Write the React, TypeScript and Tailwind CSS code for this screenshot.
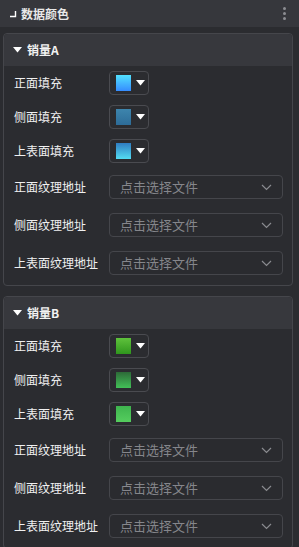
import React from 'react';

const font = { fontFamily: '"Noto Sans CJK SC", "Noto Sans", sans-serif' };

type ColorRow = { label: string; from: string; to: string };
type Group = { name: string; colors: ColorRow[] };

const groups: Group[] = [
  {
    name: '销量A',
    colors: [
      { label: '正面填充', from: '#52e2ff', to: '#358cff' },
      { label: '侧面填充', from: '#3d85ad', to: '#2d6c98' },
      { label: '上表面填充', from: '#2f7dc2', to: '#54dcf2' },
    ],
  },
  {
    name: '销量B',
    colors: [
      { label: '正面填充', from: '#5fc23c', to: '#2f961d' },
      { label: '侧面填充', from: '#2d6a38', to: '#42c057' },
      { label: '上表面填充', from: '#3eb44e', to: '#55cd5e' },
    ],
  },
];

const textures = ['正面纹理地址', '侧面纹理地址', '上表面纹理地址'];

function Caret() {
  return (
    <svg width="9" height="6" viewBox="0 0 9 6">
      <path d="M0 0 L9 0 L4.5 5.5 Z" fill="#ffffff" />
    </svg>
  );
}

function ColorPicker({ from, to }: { from: string; to: string }) {
  return (
    <div className="ml-[95px] flex h-[24px] w-[40px] items-center gap-[5px] rounded-[4px] border border-[#4a4b50] pl-[6px]">
      <div className="h-[16px] w-[15px]" style={{ background: `linear-gradient(${from}, ${to})` }} />
      <Caret />
    </div>
  );
}

function FileSelect() {
  return (
    <div className="flex h-[24px] w-[174px] items-center justify-between rounded-[4px] border border-[#45464b] bg-[#2a2b2f] pl-[10px] pr-[10px]">
      <span className="text-[13px] text-[#85868b]">点击选择文件</span>
      <svg width="11" height="7" viewBox="0 0 11 7">
        <path d="M1 1 L5.5 5.5 L10 1" stroke="#8a8b90" strokeWidth="1.2" fill="none" />
      </svg>
    </div>
  );
}

function GroupCard({ group }: { group: Group }) {
  return (
    <div className="mx-[3px] rounded-[4px] border border-[#45464b] pb-[3px]">
      <div className="flex h-[32px] items-center gap-[5px] rounded-t-[4px] bg-[#37383d] pl-[9px]">
        <Caret />
        <span className="text-[12px] font-bold text-[#f2f2f2]">{group.name}</span>
      </div>
      {group.colors.map((c) => (
        <div key={c.label} className="flex h-[34px] items-center pl-[10px]">
          <span className="w-0 whitespace-nowrap text-[12px] text-[#f0f0f0]">{c.label}</span>
          <ColorPicker from={c.from} to={c.to} />
        </div>
      ))}
      {textures.map((t) => (
        <div key={t} className="flex h-[38px] items-center pl-[10px]">
          <span className="w-[95px] whitespace-nowrap text-[12px] text-[#f0f0f0]">{t}</span>
          <FileSelect />
        </div>
      ))}
    </div>
  );
}

export default function App() {
  return (
    <div className="h-[547px] w-[299px] overflow-hidden bg-[#2b2c30]" style={font}>
      <div className="flex h-[27px] items-center justify-between bg-[#36373c] pl-[9px] pr-[13px]">
        <div className="flex items-center gap-[4px]">
          <svg width="8" height="8" viewBox="0 0 8 8">
            <path d="M6.5 1 L6.5 6.5 L1 6.5" stroke="#ffffff" strokeWidth="1.4" fill="none" />
          </svg>
          <span className="text-[12px] font-bold text-[#e8e8e8]">数据颜色</span>
        </div>
        <div className="flex flex-col gap-[2px]">
          <div className="h-[3px] w-[3px] rounded-full bg-[#8c8d92]" />
          <div className="h-[3px] w-[3px] rounded-full bg-[#8c8d92]" />
          <div className="h-[3px] w-[3px] rounded-full bg-[#8c8d92]" />
        </div>
      </div>
      <div className="flex flex-col gap-[10px] pt-[6px] pr-[3px]">
        {groups.map((g) => (
          <GroupCard key={g.name} group={g} />
        ))}
      </div>
    </div>
  );
}
